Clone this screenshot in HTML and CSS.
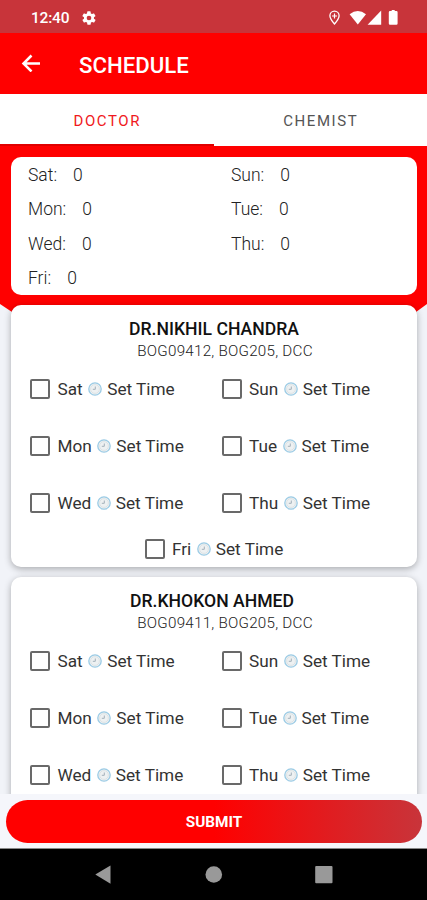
FILE: index.html
```
<!DOCTYPE html>
<html lang="en">
<head>
<meta charset="utf-8">
<title>Schedule</title>
<link rel="stylesheet" href="styles.css">
</head>
<body>
<svg class="defs" width="0" height="0" aria-hidden="true">
  <symbol id="clock" viewBox="0 0 14 14">
    <circle cx="7" cy="7" r="6.2" fill="#eef1f2" stroke="#9bcbe5" stroke-width="1.3"/>
    <circle cx="7" cy="7" r="4.4" fill="none" stroke="#d9dfe2" stroke-width=".8"/>
    <path d="M7.3 4.500V7.300H4.800" fill="none" stroke="#a3b1ba" stroke-width="1"/>
  </symbol>
</svg>
<div class="screen">
  <div class="status">
    <span class="time">12:40</span>
    <svg class="gear" width="16" height="16" viewBox="0 0 24 24"><path fill="#fff" fill-rule="evenodd" d="M19.4 13a7.500 7.500 0 0 0 0-2l2.100-1.600a.5.5 0 0 0 .1-.6l-2-3.500a.5.5 0 0 0-.6-.2l-2.500 1a7.300 7.300 0 0 0-1.700-1l-.4-2.600a.5.500 0 0 0-.5-.5h-4a.5.500 0 0 0-.5.500l-.4 2.600a7.300 7.300 0 0 0-1.700 1l-2.500-1a.5.500 0 0 0-.6.200l-2 3.500a.5.500 0 0 0 .1.600L4.500 11a7.500 7.500 0 0 0 0 2l-2.100 1.600a.5.500 0 0 0-.1.600l2 3.500c.1.200.4.300.6.200l2.500-1c.5.400 1.100.7 1.700 1l.4 2.600c0 .3.200.5.500.5h4c.3 0 .5-.2.500-.5l.4-2.600a7.300 7.300 0 0 0 1.700-1l2.500 1c.2.100.5 0 .6-.2l2-3.500a.5.500 0 0 0-.1-.6zM12 15.500a3.500 3.500 0 1 1 0-7 3.500 3.500 0 0 1 0 7z"/></svg>
    <svg class="indicators" width="72" height="17" viewBox="0 0 72 17">
      <path d="M6.500 15C3.200 11.300 1.900 9 1.900 6.800a4.600 4.600 0 0 1 9.200 0C11.100 9 9.800 11.300 6.500 15z" fill="none" stroke="#fff" stroke-width="1.300"/>
      <path d="M6.500 4.500v5M4 7h5" stroke="#fff" stroke-width="1.200"/>
      <path d="M21.600 5.200Q29.800-1.400 38 5.200L29.800 15.500z" fill="#fff"/>
      <path d="M53.200 1.500V15.700H39.600z" fill="#fff"/>
      <path d="M62 2h1.700V1h3v1h1.700q1.200 0 1.200 1.200v11.300q0 1.200-1.200 1.200H62q-1.200 0-1.200-1.200V3.200Q60.800 2 62 2z" fill="#fff"/>
    </svg>
  </div>
  <header class="appbar">
    <svg width="20" height="18" viewBox="0 0 20 18"><path d="M19 9.500H2.500M10.500 1.500L2.500 9.500 10.500 17.500" fill="none" stroke="#fff" stroke-width="2.500"/></svg>
    <h1>SCHEDULE</h1>
  </header>
  <nav class="tabs">
    <div class="tab active"><span>DOCTOR</span></div>
    <div class="tab"><span>CHEMIST</span></div>
  </nav>
  <main class="content">
    <section class="hero">
      <div class="summary">
        <div>Sat:<b>0</b></div><div>Sun:<b>0</b></div>
        <div>Mon:<b>0</b></div><div>Tue:<b>0</b></div>
        <div>Wed:<b>0</b></div><div>Thu:<b>0</b></div>
        <div>Fri:<b>0</b></div>
      </div>
    </section>
    <article class="card">
      <h2 class="first">DR.NIKHIL CHANDRA</h2>
      <p>BOG09412, BOG205, DCC</p>
      <div class="days">
        <div class="day"><i></i>Sat<svg><use href="#clock"/></svg>Set Time</div>
        <div class="day"><i></i>Sun<svg><use href="#clock"/></svg>Set Time</div>
        <div class="day"><i></i>Mon<svg><use href="#clock"/></svg>Set Time</div>
        <div class="day"><i></i>Tue<svg><use href="#clock"/></svg>Set Time</div>
        <div class="day"><i></i>Wed<svg><use href="#clock"/></svg>Set Time</div>
        <div class="day"><i></i>Thu<svg><use href="#clock"/></svg>Set Time</div>
        <div class="day last"><i></i>Fri<svg><use href="#clock"/></svg>Set Time</div>
      </div>
    </article>
    <article class="card">
      <h2 class="second">DR.KHOKON AHMED</h2>
      <p>BOG09411, BOG205, DCC</p>
      <div class="days">
        <div class="day"><i></i>Sat<svg><use href="#clock"/></svg>Set Time</div>
        <div class="day"><i></i>Sun<svg><use href="#clock"/></svg>Set Time</div>
        <div class="day"><i></i>Mon<svg><use href="#clock"/></svg>Set Time</div>
        <div class="day"><i></i>Tue<svg><use href="#clock"/></svg>Set Time</div>
        <div class="day"><i></i>Wed<svg><use href="#clock"/></svg>Set Time</div>
        <div class="day"><i></i>Thu<svg><use href="#clock"/></svg>Set Time</div>
      </div>
    </article>
  </main>
  <footer class="actions"><button type="button">SUBMIT</button></footer>
  <div class="navbar">
    <svg width="427" height="51" viewBox="0 0 427 51"><path d="M95.300 25.500L110.500 16.600V34.800z" fill="#999"/><circle cx="213.800" cy="25.500" r="8.300" fill="#999"/><rect x="315.200" y="17" width="17.300" height="17.300" rx="1" fill="#999"/></svg>
  </div>
</div>
</body>
</html>
```
FILE: styles.css
```
* { box-sizing: border-box; }
body { margin: 0; font-family: Roboto, sans-serif; background: #f1f3f8; }
.defs { display: none; }
h1, h2, p { margin: 0; }
.screen { width: 427px; height: 900px; display: flex; flex-direction: column; overflow: hidden; }
.status { height: 33px; flex: none; background: #c8343a; display: flex; align-items: center; padding: 2px 27px 0 31px; color: #fff; }
.time { font-size: 15.5px; font-weight: 500; line-height: 18px; width: 50px; letter-spacing: -.2px; }
.indicators { margin-left: auto; }
.appbar { height: 61px; flex: none; background: #f00; color: #fff; display: flex; align-items: center; padding: 0 0 1px 21px; }
.appbar h1 { margin-left: 38px; padding-top: 4px; font-size: 22.200px; font-weight: 500; line-height: 26px; }
.tabs { height: 52px; flex: none; background: #fff; display: flex; }
.tab { flex: 1; display: flex; align-items: center; justify-content: center; font-size: 15px; letter-spacing: 1.6px; color: #555; padding-top: 2px; }
.tab span { padding-left: 1px; }
.tab.active { color: #f01820; border-bottom: 2px solid #e00000; padding-top: 4px; }
.content { flex: 1; min-height: 0; overflow: hidden; }
.hero { height: 166px; padding: 11px 10px 0 11px; background: #f00; clip-path: polygon(0 0, 100% 0, 100% 158px, 416px 166px, 12px 166px, 0 158px); }
.summary { height: 138px; background: #fff; border-radius: 10px; padding: 1px 17px 0; display: grid; grid-template-columns: 203px 1fr; grid-auto-rows: 34.3px; font-size: 17.500px; line-height: 34px; color: #222; font-weight: 300; }
.summary b { font-weight: 300; margin-left: 16px; }
.card { position: relative; height: 262px; margin: -7px 10px 17px 11px; padding-top: 13px; background: #fff; border-radius: 10px; box-shadow: 0 2px 7px rgba(0, 0, 0, .3); }
.card h2 { font-size: 17.600px; font-weight: 500; line-height: 22px; color: #111; text-align: center; }
.card h2.second { padding-right: 4px; }
.card p { font-size: 15.200px; letter-spacing: .25px; font-weight: 300; line-height: 22px; color: #222; text-align: center; padding-left: 22px; }
.days { display: grid; grid-template-columns: 191.500px 1fr; grid-template-rows: 57px 57px 57px 34px; padding-left: 19px; margin-top: -1.500px; }
.day { display: flex; align-items: center; height: 57px; font-size: 17.200px; color: #333; white-space: nowrap; }
.day i { width: 20px; height: 20px; border: 2px solid #696969; border-radius: 2px; margin-right: 7.500px; }
.day svg { width: 14px; height: 14px; margin: 0 5px 0 5.500px; }
.day.last { grid-column: 1 / 3; height: 34px; padding-left: 114.500px; }
.actions { height: 54px; flex: none; padding: 6px 5px 0 6px; background: #f5f6fb; }
.actions button { display: block; width: 416px; height: 42.500px; border: 0; padding: 2px 0 0; border-radius: 22px; background: linear-gradient(90deg, #f00 50%, #c8343a); color: #fff; font: 700 15.300px Roboto, sans-serif; }
.navbar { height: 52px; flex: none; background: #000; border-top: 1px solid #888; }
.navbar svg { display: block; }
```
